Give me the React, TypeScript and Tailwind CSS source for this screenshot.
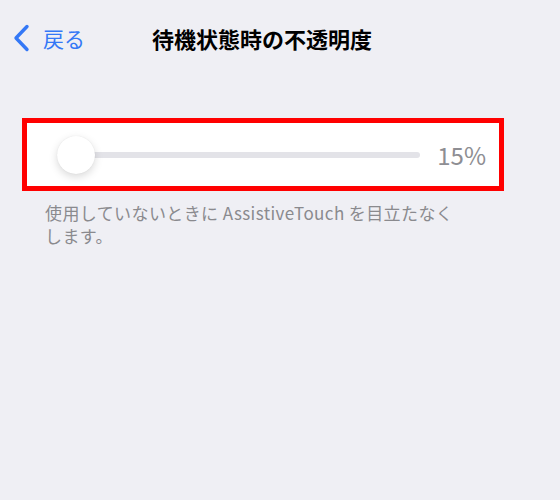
export default function App() {
  const font = { fontFamily: '"Noto Sans CJK JP", "Noto Sans", sans-serif' };
  return (
    <div className="w-[560px] h-[500px] bg-[#efeff4] overflow-hidden" style={font}>
      <div className="h-[76px] flex items-center">
        <div className="pl-[13px] w-[152px] flex items-center gap-[13px] text-[#3478f6]">
          <svg width="17" height="28" viewBox="0 0 17 28" fill="none">
            <path d="M14 2.5L3 14L14 25.5" stroke="#3478f6" strokeWidth="3.4" strokeLinecap="round" strokeLinejoin="round" />
          </svg>
          <span className="text-[21px] leading-none">戻る</span>
        </div>
        <span className="text-[22px] font-bold text-black leading-none">待機状態時の不透明度</span>
      </div>

      <div className="mt-[42px] mx-[22px] w-[482px] h-[73px] bg-white border-[5px] border-[#ff0000] flex items-center pl-[30px] pr-[13px]">
        <div className="relative flex-1 h-[38px] flex items-center">
          <div className="w-full h-[6px] rounded-full bg-[#e3e3e8]" />
          <div className="absolute left-0 top-0 size-[38px] rounded-full bg-white shadow-[0_3px_8px_rgba(0,0,0,0.15),0_0_1px_rgba(0,0,0,0.1)]" />
        </div>
        <span className="ml-[17px] text-[24px] leading-none text-[#8e8e93]">15%</span>
      </div>

      <p className="mt-[10px] pl-[45px] text-[17px] leading-[23px] tracking-[0.4px] text-[#8a8a8e]">
        使用していないときに AssistiveTouch を目立たなく
        <br />
        します。
      </p>
    </div>
  );
}
